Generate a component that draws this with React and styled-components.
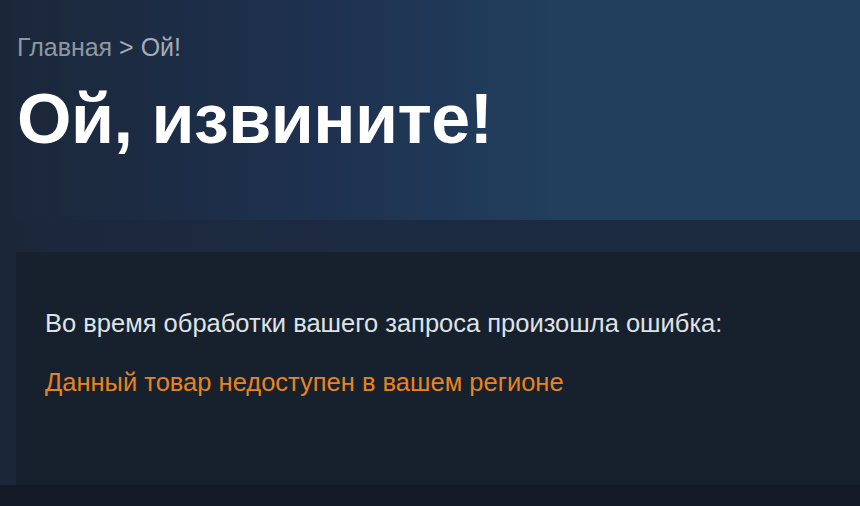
import React from "react";
import styled, { createGlobalStyle } from "styled-components";

const GlobalStyle = createGlobalStyle`
  * {
    box-sizing: border-box;
  }
  html, body {
    margin: 0;
    padding: 0;
    background: #1b2738;
    font-family: "Liberation Sans", Arial, sans-serif;
  }
`;

const Page = styled.div`
  width: 100%;
  height: 506px;
  display: flex;
  flex-direction: column;
  overflow: hidden;
  background: #1b2739;
`;

const Hero = styled.header`
  height: 220px;
  padding: 33px 17px 0;
  background: linear-gradient(90deg, #1b2739 0%, #1e3150 38%, #223f5e 65%, #223f5e 100%);
`;

const Crumbs = styled.div`
  font-size: 25px;
  line-height: 28px;
  color: #8f98a0;

  span {
    color: #a3adb7;
  }
`;

const Title = styled.h1`
  margin: 20px 0 0;
  font-size: 70px;
  line-height: 76px;
  font-weight: 700;
  color: #ffffff;
  letter-spacing: -0.5px;
`;

const Band = styled.div`
  height: 32px;
  background: linear-gradient(90deg, #1b2739 0%, #1c2a42 40%, #1c2a40 100%);
`;

const Body = styled.div`
  flex: 1;
  display: flex;
  flex-direction: column;
`;

const Panel = styled.section`
  margin-left: 16px;
  height: 233px;
  padding: 56px 29px 0;
  background: #17202d;
`;

const Message = styled.p`
  margin: 0;
  font-size: 25.5px;
  line-height: 30px;
  color: ${(p) => (p.$error ? "#e8831f" : "#dfe3e6")};

  & + & {
    margin-top: 29px;
  }
`;

const Footer = styled.footer`
  flex: 1;
  background: #141a25;
`;

export default function App() {
  return (
    <>
      <GlobalStyle />
      <Page>
        <Hero>
          <Crumbs>
            Главная <span>&gt; Ой!</span>
          </Crumbs>
          <Title>Ой, извините!</Title>
        </Hero>
        <Band />
        <Body>
          <Panel>
            <Message>Во время обработки вашего запроса произошла ошибка:</Message>
            <Message $error>Данный товар недоступен в вашем регионе</Message>
          </Panel>
          <Footer />
        </Body>
      </Page>
    </>
  );
}
